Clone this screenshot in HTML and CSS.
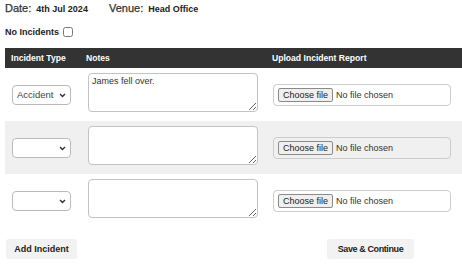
FILE: index.html
```html
<!DOCTYPE html>
<html lang="en">
<head>
    <meta charset="UTF-8">
    <title>Incidents</title>
    <link rel="stylesheet" href="styles.css">
</head>
<body>
<div class="meta">
    <span class="label">Date:</span> <span class="value">4th Jul 2024</span>
    <span class="label venue">Venue:</span> <span class="value">Head Office</span>
</div>
<label class="none">No Incidents <input type="checkbox"></label>
<table class="incidents">
    <colgroup>
        <col class="c1">
        <col class="c2">
        <col class="c3">
    </colgroup>
    <thead>
    <tr>
        <th>Incident Type</th>
        <th>Notes</th>
        <th>Upload Incident Report</th>
    </tr>
    </thead>
    <tbody>
    <tr>
        <td>
            <div class="type">
                <select><option>Accident</option></select>
                <svg class="arrow" width="7" height="5" viewBox="0 0 7 5"><path d="M1 1l2.5 2.5L6 1" fill="none" stroke="#333" stroke-width="1.4"/></svg>
            </div>
        </td>
        <td class="notes"><textarea>James fell over.</textarea></td>
        <td><label class="upload"><input type="file"><span class="pick">Choose file</span><span>No file chosen</span></label></td>
    </tr>
    <tr class="alt">
        <td>
            <div class="type">
                <select><option></option></select>
                <svg class="arrow" width="7" height="5" viewBox="0 0 7 5"><path d="M1 1l2.5 2.5L6 1" fill="none" stroke="#333" stroke-width="1.4"/></svg>
            </div>
        </td>
        <td class="notes"><textarea></textarea></td>
        <td><label class="upload"><input type="file"><span class="pick">Choose file</span><span>No file chosen</span></label></td>
    </tr>
    <tr>
        <td>
            <div class="type">
                <select><option></option></select>
                <svg class="arrow" width="7" height="5" viewBox="0 0 7 5"><path d="M1 1l2.5 2.5L6 1" fill="none" stroke="#333" stroke-width="1.4"/></svg>
            </div>
        </td>
        <td class="notes"><textarea></textarea></td>
        <td><label class="upload"><input type="file"><span class="pick">Choose file</span><span>No file chosen</span></label></td>
    </tr>
    </tbody>
</table>
<div class="actions">
    <button class="btn add">Add Incident</button>
    <button class="btn save">Save &amp; Continue</button>
</div>
</body>
</html>
```

FILE: styles.css
```css
*{ box-sizing: border-box}
body{ margin: 0; padding: 0 0 0 5px; font-family: "Liberation Sans", Arial, sans-serif; color: #222; overflow: hidden}
.meta{ height: 17px; padding-top: 2px; font-size: 11px; color: #333}
.meta .label{ -webkit-text-stroke: 0.25px #333}
.meta .value{ margin-left: 2px; font-size: 9px; font-weight: bold; color: #222}
.meta .venue{ margin-left: 18px}
.none{ display: flex; align-items: center; margin-top: 7px; height: 15px; font-size: 9px; font-weight: bold}
.none input{ margin: 0 0 0 4px; width: 10px; height: 10px}
.incidents{ margin-top: 9px; width: 457px; border-collapse: collapse; table-layout: fixed}
.c1{ width: 75px}
.c2{ width: 186px}
.c3{ width: 196px}
.incidents th{ height: 20px; padding: 0 6px; background: #333; color: #fff;
    font-size: 8.6px; font-weight: bold; text-align: left}
.incidents td{ height: 53px; padding: 5px 7px 9px; vertical-align: middle}
.incidents td.notes{ padding-left: 8px}
.incidents tr.alt td{ background: #f0f0f0}
.type{ position: relative; width: 59px; height: 20px; margin-top: 4px}
.type select{ display: block; width: 100%; height: 100%; padding: 0 0 0 4px;
    -webkit-appearance: none; appearance: none;
    border: 1px solid #bbb; border-radius: 4px; background: #fff;
    font-family: "Liberation Sans", Arial, sans-serif; font-size: 9.5px; color: #444}
.type .arrow{ position: absolute; right: 5px; top: 8px; pointer-events: none}
textarea{ display: block; width: 170px; height: 39px; padding: 2px 3px; resize: vertical;
    border: 1px solid #c3c3c3; border-radius: 4px;
    font-family: "Liberation Sans", Arial, sans-serif; font-size: 9px; color: #333}
.upload{ display: flex; align-items: center; width: 178px; height: 22px; margin-top: 4px; padding: 0 4px;
    border: 1px solid #ccc; border-radius: 4px; background: #fff;
    font-size: 9px; color: #333}
.upload input{ display: none}
.alt .upload{ background: transparent}
.pick{ height: 14px; margin-right: 3px; padding: 0 4px; line-height: 12px;
    border: 1px solid #8a8a8a; border-radius: 2px; background: #efefef; color: #222}
.actions{ display: flex; margin-top: 12px; padding-left: 1px}
.btn{ height: 20px; padding: 0; border: none; border-radius: 3px; background: #f2f2f2;
    font-family: "Liberation Sans", Arial, sans-serif; font-size: 9px; font-weight: bold; color: #222}
.add{ width: 71px}
.save{ width: 87px; margin-left: 250px; letter-spacing: -0.4px}
```
